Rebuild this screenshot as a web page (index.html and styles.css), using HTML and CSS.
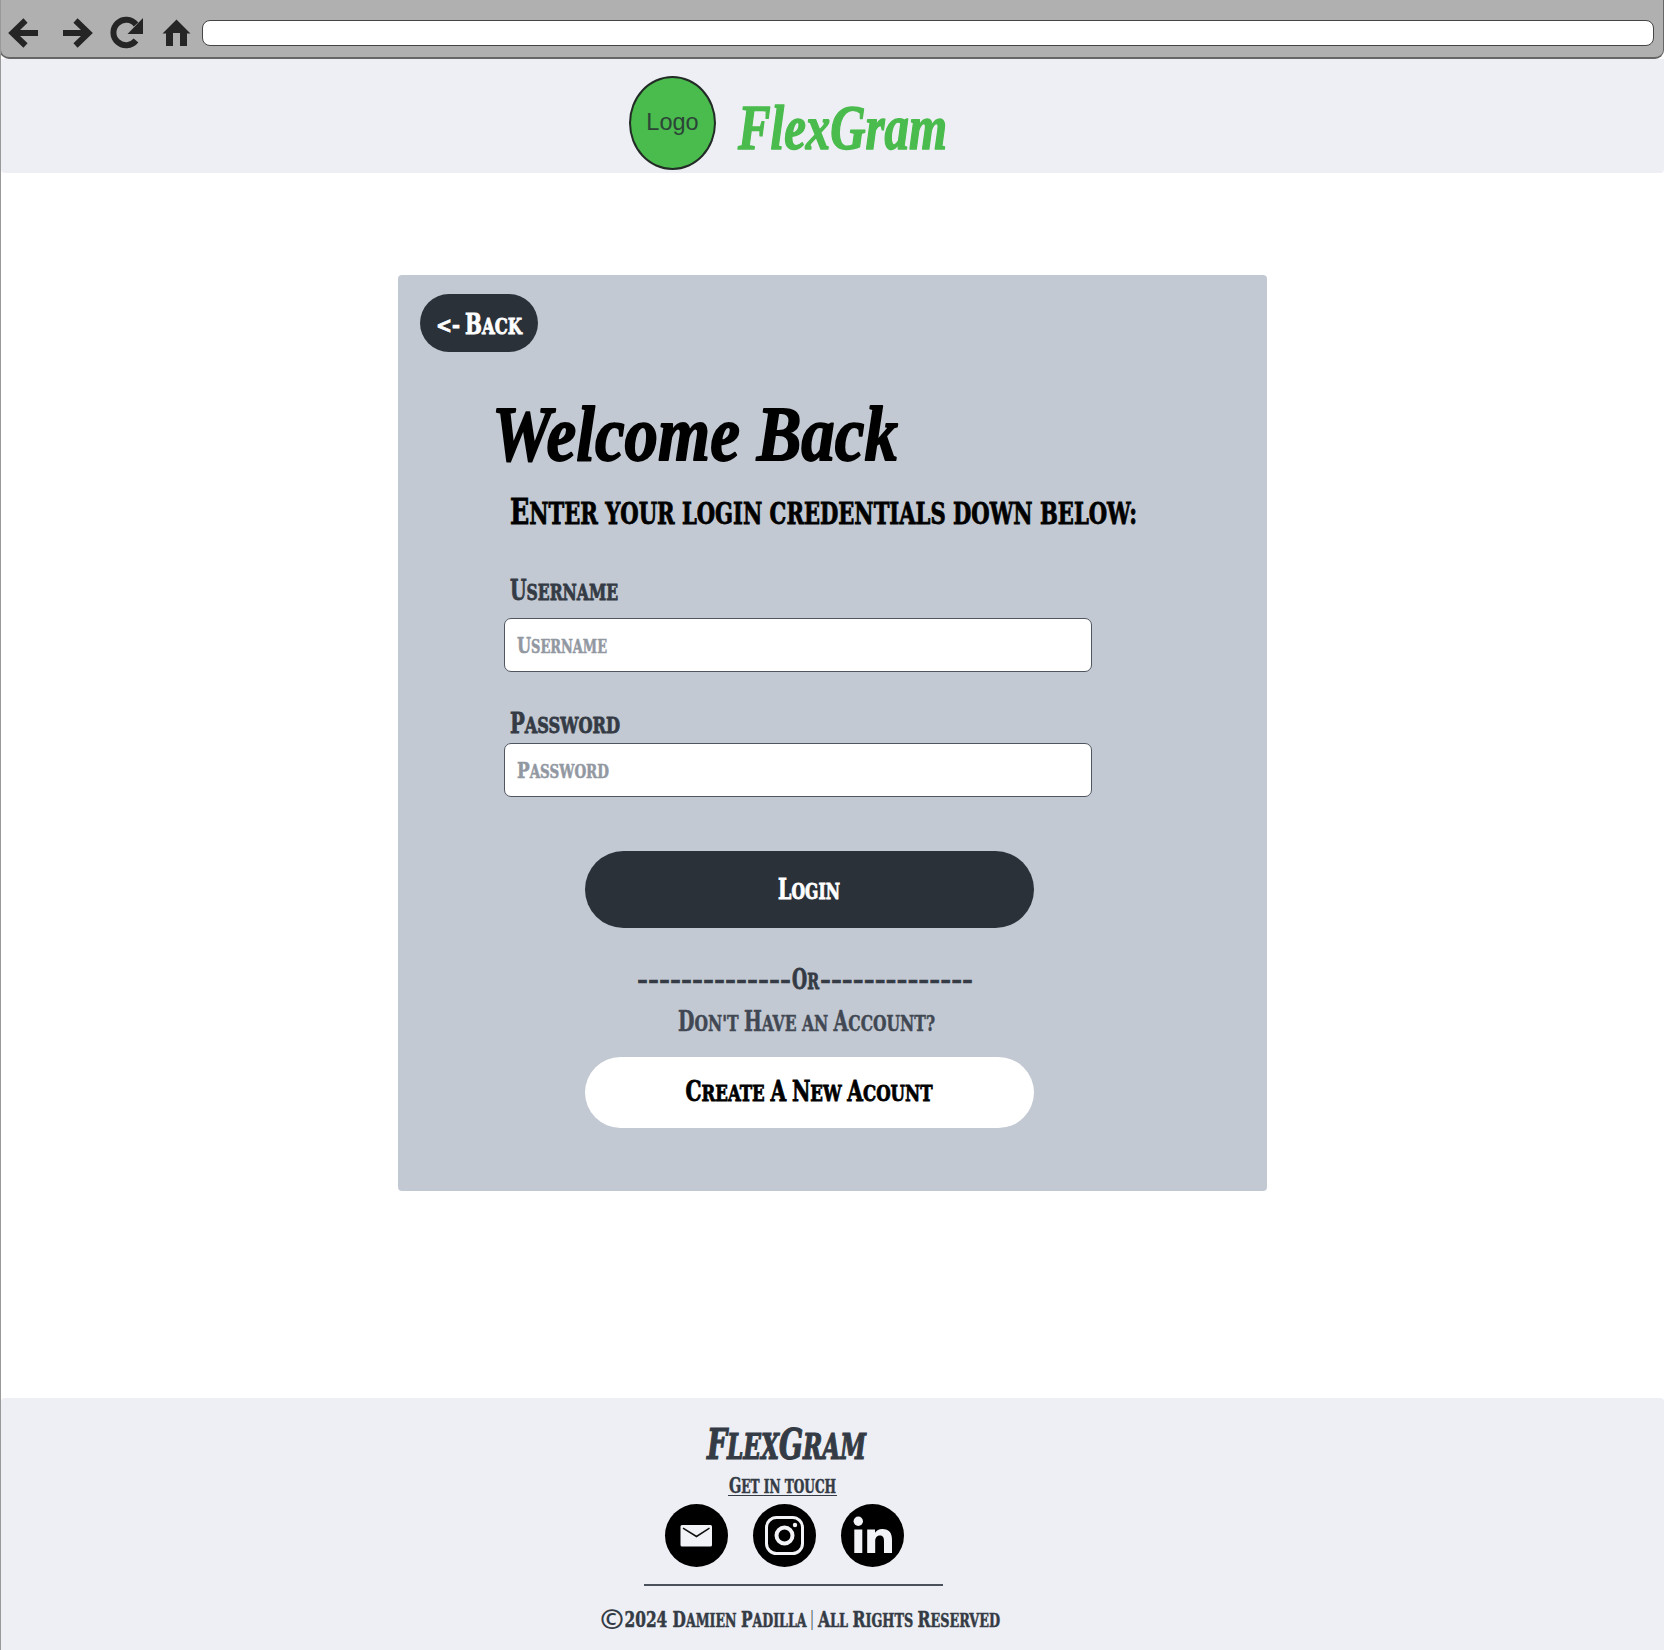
FILE: index.html
```html
<!DOCTYPE html>
<html lang="en">
<head>
<meta charset="utf-8">
<title>FlexGram - Login</title>
<link rel="stylesheet" href="styles.css">
</head>
<body>
<div class="window">
  <nav class="chrome">
    <svg class="chrome-icons" width="201" height="58" viewBox="0 0 201 58">
      <path class="stroke" d="M38 33H13M25.500 20.500L12.500 33L25.500 45.500"/>
      <path class="stroke" d="M63 33H88M75.500 20.500L88.500 33L75.500 45.500"/>
      <path class="stroke" d="M136 40.500A12.700 12.700 0 1 1 136 24.500"/>
      <path class="solid" d="M143 18V34H127.500Z"/>
      <path class="solid" d="M176.500 19.500L190.500 33.500H187V46H180V33H173V46H166V33.500H162.500Z"/>
    </svg>
    <div class="address"></div>
  </nav>

  <header class="header">
    <div class="logo">Logo</div>
    <svg class="brand" width="212" height="64"><text class="script" x="1" y="49" textLength="209" lengthAdjust="spacingAndGlyphs">FlexGram</text></svg>
  </header>

  <main class="main">
    <section class="card">
      <a class="back"><svg width="86" height="30"><text class="slab white" x="0" y="23.500" textLength="24" lengthAdjust="spacingAndGlyphs">&lt;-</text><text class="slab white" x="29" y="25" textLength="57" lengthAdjust="spacingAndGlyphs"><tspan class="cap">B</tspan>ack</text></svg></a>
      <svg class="title" width="410" height="70"><text class="script" x="0" y="60" textLength="406" lengthAdjust="spacingAndGlyphs">Welcome Back</text></svg>
      <svg class="lead" width="627" height="40"><text class="slab black" x="0" y="33.500" textLength="627" lengthAdjust="spacingAndGlyphs"><tspan class="cap">E</tspan>nter your login credentials down below:</text></svg>

      <svg class="label user" width="108" height="30"><text class="slab" x="0" y="24.500" textLength="108" lengthAdjust="spacingAndGlyphs"><tspan class="cap">U</tspan>sername</text></svg>
      <div class="field"><svg width="90" height="30"><text class="slab hint" x="0" y="22.500" textLength="90" lengthAdjust="spacingAndGlyphs"><tspan class="cap">U</tspan>sername</text></svg></div>

      <svg class="label pass" width="110" height="30"><text class="slab" x="0" y="24.500" textLength="110" lengthAdjust="spacingAndGlyphs"><tspan class="cap">P</tspan>assword</text></svg>
      <div class="field"><svg width="92" height="30"><text class="slab hint" x="0" y="22.500" textLength="92" lengthAdjust="spacingAndGlyphs"><tspan class="cap">P</tspan>assword</text></svg></div>

      <a class="pill login"><svg width="62" height="30"><text class="slab white" x="-1" y="24" textLength="62" lengthAdjust="spacingAndGlyphs"><tspan class="cap">L</tspan>ogin</text></svg></a>

      <div class="divider">
        <svg width="154" height="30"><text class="slab dashes" x="-1" y="22.500" textLength="154" lengthAdjust="spacingAndGlyphs">--------------</text></svg>
        <svg width="28" height="30"><text class="slab" x="0" y="24" textLength="27" lengthAdjust="spacingAndGlyphs"><tspan class="cap">O</tspan>r</text></svg>
        <svg width="153" height="30"><text class="slab dashes" x="0" y="22.500" textLength="153" lengthAdjust="spacingAndGlyphs">--------------</text></svg>
      </div>
      <svg class="ask" width="257" height="30"><text class="slab" x="0" y="24.500" textLength="257" lengthAdjust="spacingAndGlyphs"><tspan class="cap">D</tspan>on't <tspan class="cap">H</tspan>ave an <tspan class="cap">A</tspan>ccount?</text></svg>
      <a class="pill create"><svg width="247" height="30"><text class="slab black" x="-0.500" y="23.500" textLength="247" lengthAdjust="spacingAndGlyphs"><tspan class="cap">C</tspan>reate <tspan class="cap">A</tspan> <tspan class="cap">N</tspan>ew <tspan class="cap">A</tspan>count</text></svg></a>
    </section>
  </main>

  <footer class="footer">
    <svg class="foot-brand" width="161" height="42"><text class="slab" x="1" y="37" textLength="159" lengthAdjust="spacingAndGlyphs"><tspan class="cap">F</tspan>lex<tspan class="cap">G</tspan>ram</text></svg>
    <div class="touch"><svg width="109" height="22"><text class="slab" x="1" y="20" textLength="107" lengthAdjust="spacingAndGlyphs"><tspan class="cap">G</tspan>et in touch</text></svg></div>
    <div class="socials">
      <svg width="63" height="63" viewBox="0 0 63 63">
        <circle cx="31.500" cy="31.500" r="31.500"/>
        <rect class="paper" x="15.500" y="21" width="31.500" height="21.500" rx="1.500"/>
        <path class="flap" d="M18 24.200L31.500 32.500L44.500 24.200"/>
      </svg>
      <svg width="63" height="63" viewBox="0 0 63 63">
        <circle cx="31.500" cy="31.500" r="31.500"/>
        <rect class="ring" x="13.500" y="13.500" width="36" height="36" rx="10"/>
        <circle class="ring lens" cx="31.500" cy="31.500" r="8"/>
        <circle class="paper" cx="42" cy="21" r="2.200"/>
      </svg>
      <svg width="63" height="63" viewBox="0 0 63 63">
        <circle cx="31.500" cy="31.500" r="31.500"/>
        <circle class="paper" cx="17.300" cy="17.300" r="4.700"/>
        <path class="paper" d="M13.300 25.500H21.300V49H13.300ZM26.200 25.500H34V28.700C35.500 26.200 38 24.900 41.200 24.900C48.500 24.900 51 29 51 36V49H43V37.500C43 34 42.300 31.500 38.900 31.500C35.500 31.500 34.200 34 34.200 37.500V49H26.200Z"/>
      </svg>
    </div>
    <div class="rule"></div>
    <svg class="copyright" width="399" height="26">
      <text class="mark" x="-1" y="22.500" textLength="24" lengthAdjust="spacingAndGlyphs">©</text>
      <text class="slab" x="23.500" y="20.500" textLength="182" lengthAdjust="spacingAndGlyphs"><tspan class="cap">2024 D</tspan>amien <tspan class="cap">P</tspan>adilla</text>
      <text class="bar" x="208" y="18.500" textLength="6" lengthAdjust="spacingAndGlyphs">|</text>
      <text class="slab" x="217" y="20.500" textLength="182" lengthAdjust="spacingAndGlyphs"><tspan class="cap">A</tspan>ll <tspan class="cap">R</tspan>ights <tspan class="cap">R</tspan>eserved</text>
    </svg>
  </footer>
</div>
</body>
</html>
```
FILE: styles.css
```css
* { box-sizing: border-box; }
body { margin: 0; background: #fff; }
svg { display: block; flex: none; overflow: visible; }

.window {
  width: 1664px;
  height: 1650px;
  display: flex;
  flex-direction: column;
  border-left: 1px solid #999;
  overflow: hidden;
}

/* Browser bar */
.chrome {
  flex: none;
  height: 59px;
  margin-left: -1px;
  display: flex;
  background: #b0b0b0;
  border: 1px solid #666;
  border-top: 0;
  border-bottom: 2px solid #666;
  border-radius: 0 0 9px 9px;
}
.chrome-icons { margin: 0 0 0 -1px; }
.stroke { fill: none; stroke: #252525; stroke-width: 6px; }
.solid { fill: #252525; }
.address {
  flex: 1;
  height: 26px;
  margin: 20px 9px 0 1px;
  background: #fff;
  border: 1px solid #444;
  border-radius: 8px;
}

/* Text faces */
.slab {
  font: bold 22.500px "DejaVu Serif Condensed", "DejaVu Serif", serif;
  text-transform: uppercase;
  fill: #343b45;
  stroke: #343b45;
  stroke-width: 0.800px;
}
.cap { font-size: 27.400px; }
.script {
  font: italic bold 64px "Liberation Serif", serif;
  stroke: #000;
  stroke-width: 1.800px;
  stroke-linejoin: round;
}
.white { fill: #fff; stroke: #fff; }
.black { fill: #000; stroke: #000; }

/* Header */
.header {
  flex: none;
  height: 114px;
  padding: 17px 0 0 628px;
  display: flex;
  gap: 21px;
  background: #eeeff4;
  border-radius: 0 0 4px 4px;
}
.logo {
  width: 87px;
  height: 94px;
  padding-top: 31px;
  border: 2px solid #222b25;
  border-radius: 50%;
  background: #4abb4d;
  color: #2c4437;
  font: 23.500px/27px "Liberation Sans", sans-serif;
  text-align: center;
}
.brand { margin-top: 24px; }
.brand .script { fill: #4abb4d; stroke: #4abb4d; stroke-width: 1.500px; }

/* Login card */
.main { flex: 1; padding: 102px 0 0 397px; }
.card {
  width: 869px;
  height: 916px;
  display: flex;
  flex-direction: column;
  align-items: flex-start;
  background: #c3c9d2;
  border-radius: 4px;
}
.back {
  flex: none;
  width: 118px;
  height: 58px;
  margin: 19px 0 0 22px;
  padding: 15px 0 0 16px;
  border-radius: 29px;
  background: #2b3139;
}
.title { margin: 48px 0 0 94px; }
.title .script { font-size: 79px; }
.lead { margin: 20px 0 0 112px; }
.lead .slab { font-size: 30px; }
.lead .cap { font-size: 36px; }
.label { margin-left: 112px; }
.user { margin-top: 45px; margin-bottom: 13px; }
.pass { margin-top: 36px; margin-bottom: 5px; }
.field {
  flex: none;
  width: 588px;
  height: 54px;
  margin-left: 106px;
  padding: 11px 0 0 12px;
  background: #fff;
  border: 1px solid #50565f;
  border-radius: 7px;
}
.slab.hint { font-size: 18px; fill: #9298a2; stroke: #9298a2; stroke-width: 0.500px; }
.hint .cap { font-size: 22.500px; }
.pill {
  flex: none;
  width: 449px;
  margin-left: 187px;
  display: flex;
  justify-content: center;
  border-radius: 39px;
}
.login { height: 77px; margin-top: 54px; padding-top: 24px; background: #2b3139; }
.divider { display: flex; margin: 37px 0 0 240px; }
.dashes { stroke-width: 0.500px; }
.ask { margin: 11px 0 0 280px; }
.ask .slab { fill: #414853; stroke: #414853; stroke-width: 0.500px; }
.create { height: 71px; margin-top: 21px; padding-top: 20px; background: #fff; }

/* Footer */
.footer {
  flex: none;
  height: 252px;
  padding-top: 24px;
  background: #eeeff4;
  border-radius: 4px 4px 0 0;
}
.foot-brand { margin-left: 705px; }
.foot-brand .slab { font-size: 34.500px; font-style: italic; stroke-width: 1.200px; }
.foot-brand .cap { font-size: 42px; }
.touch {
  width: 109px;
  height: 23px;
  margin: 10px 0 0 727px;
  border-bottom: 1px solid #343b45;
}
.touch .slab { font-size: 18px; stroke-width: 0.500px; }
.touch .cap { font-size: 21.500px; }
.touch svg { margin-top: -1px; }
.socials { display: flex; gap: 25px; margin: 8px 0 0 664px; }
.paper { fill: #f2f3f6; }
.flap { fill: none; stroke: #111; stroke-width: 1.500px; }
.ring { fill: none; stroke: #f2f3f6; stroke-width: 3px; }
.lens { stroke-width: 4px; }
.rule { width: 299px; height: 2px; margin: 17px 0 0 643px; background: #4b515a; }
.copyright { margin: 20px 0 0 600px; }
.copyright .slab { font-size: 18px; stroke-width: 0.500px; }
.copyright .cap { font-size: 22px; }
.mark { font: bold 27px "Noto Sans", sans-serif; fill: #343b45; }
.bar { font: 20px "Noto Sans", sans-serif; fill: #343b45; }
```
